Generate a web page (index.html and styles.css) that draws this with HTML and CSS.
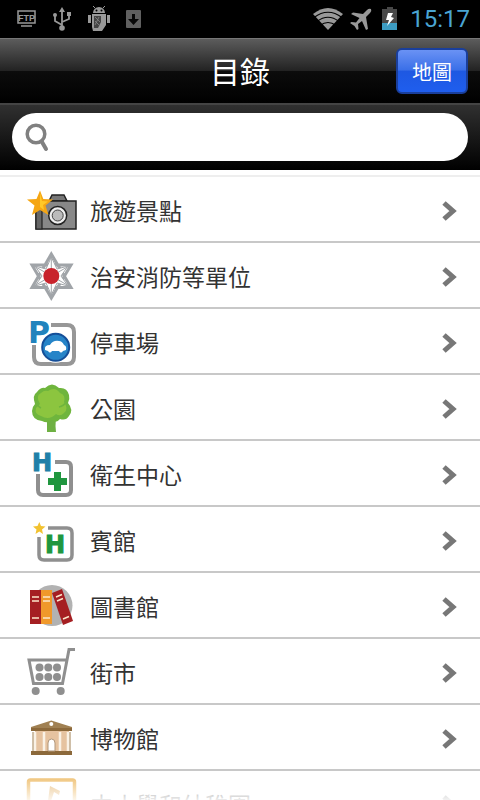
FILE: index.html
```html
<!DOCTYPE html>
<html lang="zh-Hant">
<head>
  <meta charset="UTF-8" />
  <meta name="viewport" content="width=device-width, initial-scale=1.0"/>
  <title>目錄</title>
  <link rel="stylesheet" href="styles.css">
</head>
<body>
  <div class="status-bar">
    <div class="status-left">
      <svg width="20" height="28" viewBox="0 0 20 28" aria-hidden="true">
        <rect x="1" y="6" width="17" height="12" fill="none" stroke="#999" stroke-width="1.5"/>
        <text x="9.5" y="15.500" class="ftp" text-anchor="middle">FTP</text>
        <path d="M4 21H15" stroke="#999" stroke-width="1.5"/>
      </svg>
      <svg width="20" height="28" viewBox="0 0 20 28" fill="none" stroke="#999" stroke-width="1.8" aria-hidden="true">
        <path d="M10 24V5M10 20L3 16V11M10 17L17 14V9"/>
        <path d="M10 2L13 7H7Z" fill="#999" stroke="none"/>
        <circle cx="10" cy="23" r="2.8" fill="#999" stroke="none"/>
        <circle cx="3" cy="10" r="2" fill="#999" stroke="none"/>
        <path d="M15 7H19V11H15Z" fill="#999" stroke="none"/>
      </svg>
      <svg width="24" height="28" viewBox="0 0 24 28" aria-hidden="true">
        <path d="M6 8A6 6 0 0 1 18 8ZM1 10H4V18H1ZM20 10H23V18H20ZM5 9H19V20L15 26H6L5 22Z" fill="#999"/>
        <path d="M8 3L6 1M16 3L18 1" stroke="#999"/>
        <path d="M4 8.5H20" stroke="#000"/>
        <path d="M7 11H14V17L11 23H7Z" fill="#444"/>
        <path d="M8 12L13 17M8 16L12 20M12 12L8 20" stroke="#888" stroke-width=".8"/>
        <circle cx="9.500" cy="5.500" r="1"/>
        <circle cx="14.500" cy="5.500" r="1"/>
      </svg>
      <svg width="16" height="28" viewBox="0 0 16 28" aria-hidden="true">
        <rect x="0" y="5" width="15" height="18" rx="1" fill="#606060"/>
        <path d="M6 9H9V14H13L7.500 20L2 14H6Z" fill="#080808"/>
      </svg>
    </div>
    <div class="status-right">
      <svg width="32" height="28" viewBox="0 0 32 28" aria-hidden="true">
        <path d="M1 9Q16 -3 31 9L16 25Z" fill="#999"/>
        <path d="M2 12.500Q16 2 30 12.500M5 16.500Q16 8 27 16.500M8 20.500Q16 14.500 24 20.500" fill="none" stroke="#000" stroke-width="1.200"/>
      </svg>
      <svg width="22" height="28" viewBox="0 0 22 28" aria-hidden="true">
        <path d="M21 4Q22 6 20 8L16 12L18 24L16 25L12 16L8 19L8.500 24L7 25L4.500 21L0 18L1.500 17L6 17.500L9.500 13L1 9L3 7.500L13 9L17 5Q19 3 21 4Z" fill="#999"/>
      </svg>
      <svg width="16" height="28" viewBox="0 0 16 28" aria-hidden="true">
        <path d="M5 2H11V4H15V25H0V4H5Z" fill="#484848"/>
        <path d="M0 18H15V25H0Z" fill="#3d9cc2"/>
        <path d="M6 8H11L9 12L12 13L5 21L7 15H4Z" fill="#fff"/>
      </svg>
      <span class="clock">15:17</span>
    </div>
  </div>

  <header class="title-bar">
    <h1>目錄</h1>
    <button type="button" class="map-button">地圖</button>
  </header>

  <form class="search-bar">
    <label class="search-box">
      <svg width="24" height="30" viewBox="0 0 24 30" fill="none" stroke="#808080" aria-hidden="true">
        <circle cx="11" cy="12" r="8.800" stroke-width="3.500"/>
        <path d="M17 20L21 27" stroke-width="4" stroke-linecap="round"/>
      </svg>
      <input type="search" aria-label="搜尋">
    </label>
  </form>

  <nav class="menu">
    <ul>
      <li><a href="#attractions">
        <svg class="icon" viewBox="0 0 56 64" aria-hidden="true">
          <path d="M25 24L28 18H40L43 24Z" fill="#777" stroke="#222" stroke-width="1.500"/>
          <rect x="12" y="24" width="40" height="28" fill="#888" stroke="#222" stroke-width="1.500"/>
          <path d="M12 24H18V52H12Z" fill="#666" stroke="#222" stroke-width="1.200"/>
          <circle cx="33.700" cy="38.500" r="9" fill="#eee" stroke="#222" stroke-width="1.500"/>
          <circle cx="33.700" cy="38.500" r="5.500" fill="#bbb" stroke="#444"/>
          <path d="M16 13.500L19.300 22L29 22.500L21.500 28.500L24.500 38L16 33L8 38L10.500 28.500L3 22.500L12.500 22Z" fill="#f5a614"/>
          <path d="M16 16L18 24L24 24.500L19 28L20 33L16 30Z" fill="#ffc928"/>
        </svg>
        <span>旅遊景點</span>
        <svg class="arrow" viewBox="0 0 16 22" aria-hidden="true"><path d="M3 3L12 11L3 19"/></svg>
      </a></li>
      <li><a href="#security">
        <svg class="icon" viewBox="0 0 56 64" fill="none" stroke="#a0a4a8" aria-hidden="true">
          <path d="M27.300 11L47 44.500H8ZM27.300 55L8 22H47Z" stroke-width="3"/>
          <path d="M27.300 14L33 26L44 23L37 33L44 43L33 40L27.300 52L22 40L11 43L18 33L11 23L22 26Z" fill="#fff" stroke-width="1"/>
          <path d="M27.300 13V53M10 23L45 43M45 23L10 43" stroke-width="1"/>
          <circle cx="27.300" cy="33" r="8" fill="#c8232c" stroke="none"/>
        </svg>
        <span>治安消防等單位</span>
        <svg class="arrow" viewBox="0 0 16 22" aria-hidden="true"><path d="M3 3L12 11L3 19"/></svg>
      </a></li>
      <li><a href="#parking">
        <svg class="icon" viewBox="0 0 56 64" aria-hidden="true">
          <path d="M27 16H43Q50 16 50 23V48Q50 55 43 55H17Q10 55 10 48V36" fill="none" stroke="#979797" stroke-width="4"/>
          <text x="4" y="34" class="letter letter-p">P</text>
          <circle cx="31.700" cy="38.300" r="15.500" fill="#fff"/>
          <circle cx="31.700" cy="38.300" r="13.500" fill="#2684c8" stroke="#154f99" stroke-width="2"/>
          <path d="M21 41Q20 36 26 36Q29 31 35 32Q38 32 40 36Q43 37 42 41L39 42Q37 45 35 42H28Q26 45 24 42Z" fill="#fff"/>
        </svg>
        <span>停車場</span>
        <svg class="arrow" viewBox="0 0 16 22" aria-hidden="true"><path d="M3 3L12 11L3 19"/></svg>
      </a></li>
      <li><a href="#parks">
        <svg class="icon" viewBox="0 0 56 64" aria-hidden="true">
          <path d="M23 42H32L31.500 51L32 57H23Z" fill="#6eb043"/>
          <path d="M18 46Q8 45 8 36Q8 32 11 29Q8 20 13 17Q17 12 21 13Q28 6 35 13Q43 12 45 20Q46 24 44 28Q50 35 45 41Q42 46 36 44Q32 49 28 45Q24 49 18 46Z" fill="#6fb53d"/>
          <path d="M17 41Q10 39 12 33L16 29Q11 21 17 18Q20 15 24 16Q31 11 36 18Q42 20 40 27Q45 34 40 38Q36 42 32 39Q25 46 17 41Z" fill="#8cc53f"/>
          <path d="M12 26Q13 31 17 33M43 26Q40 31 35 32" fill="none" stroke="#6fb53d" stroke-width="1.500"/>
        </svg>
        <span>公園</span>
        <svg class="arrow" viewBox="0 0 16 22" aria-hidden="true"><path d="M3 3L12 11L3 19"/></svg>
      </a></li>
      <li><a href="#health">
        <svg class="icon" viewBox="0 0 56 64" aria-hidden="true">
          <path d="M31 21H42Q47 21 47 26V49Q47 54 42 54H19Q14 54 14 49V33" fill="none" stroke="#8f8f8f" stroke-width="4"/>
          <text x="8" y="30" class="letter letter-h">H</text>
          <path d="M30 31H37V37H43V44H37V50H30V44H24V37H30Z" fill="#20963f"/>
        </svg>
        <span>衛生中心</span>
        <svg class="arrow" viewBox="0 0 16 22" aria-hidden="true"><path d="M3 3L12 11L3 19"/></svg>
      </a></li>
      <li><a href="#hotels">
        <svg class="icon" viewBox="0 0 56 64" aria-hidden="true">
          <path d="M24 21H43Q48 21 48 26V48Q48 53 43 53H20Q15 53 15 48V30" fill="none" stroke="#8f8f8f" stroke-width="3.500"/>
          <path d="M15.300 15L17 19L21.500 19.500L18 22.500L19 27L15.300 24.500L11.500 27L12.500 22.500L9 19.500L13.500 19Z" fill="#f2c230"/>
          <text x="21" y="46" class="letter letter-hotel">H</text>
        </svg>
        <span>賓館</span>
        <svg class="arrow" viewBox="0 0 16 22" aria-hidden="true"><path d="M3 3L12 11L3 19"/></svg>
      </a></li>
      <li><a href="#libraries">
        <svg class="icon" viewBox="0 0 56 64" aria-hidden="true">
          <circle cx="28" cy="32.500" r="20.500" fill="#b2b2b2"/>
          <path d="M6 17H17V51H6Z" fill="#a51f22"/>
          <path d="M17 17H28V51H17Z" fill="#f0992b"/>
          <path d="M28 20L38 16L49 48L39 52Z" fill="#a51f22"/>
          <path d="M8 24H15M8 28H15M8 45H15M19 24H26M19 28H26M19 45H26M32 24L38 21.500M33 28L39 25.500M39 46L45 43.500" stroke="#fbe7ca" stroke-width="1.500"/>
        </svg>
        <span>圖書館</span>
        <svg class="arrow" viewBox="0 0 16 22" aria-hidden="true"><path d="M3 3L12 11L3 19"/></svg>
      </a></li>
      <li><a href="#markets">
        <svg class="icon" viewBox="0 0 56 64" aria-hidden="true">
          <path d="M51 10.500H45L38.500 44.500H9.500L5 21H42" fill="none" stroke="#8f8f8f" stroke-width="3"/>
          <g fill="#8f8f8f">
            <circle cx="15.500" cy="28.500" r="4"/><circle cx="24.300" cy="28.500" r="4"/><circle cx="33" cy="28.500" r="4"/>
            <circle cx="15.500" cy="38" r="4"/><circle cx="24.300" cy="38" r="4"/><circle cx="33" cy="38" r="4"/>
            <circle cx="11.700" cy="52" r="4"/><circle cx="36.700" cy="52" r="4"/>
          </g>
        </svg>
        <span>街市</span>
        <svg class="arrow" viewBox="0 0 16 22" aria-hidden="true"><path d="M3 3L12 11L3 19"/></svg>
      </a></li>
      <li><a href="#museums">
        <svg class="icon" viewBox="0 0 56 64" aria-hidden="true">
          <path d="M11 26H45V46H11Z" fill="#e6c3a0"/>
          <path d="M7 22L27.300 15.500L48 22V23H7Z" fill="#a08052"/>
          <path d="M7 23H48V26H7ZM7 46H48V50H7Z" fill="#8c693b"/>
          <path d="M11 27V46M20 27V46M36 27V46M44 27V46" stroke="#faf2e6" stroke-width="2.500"/>
          <path d="M9 27V46M46 27V46" stroke="#a08052"/>
          <path d="M24 46V38Q24 34 27.500 34Q31 34 31 38V46Z" fill="#fff" stroke="#b1977b"/>
          <circle cx="27.300" cy="19" r="2" fill="#fff"/>
        </svg>
        <span>博物館</span>
        <svg class="arrow" viewBox="0 0 16 22" aria-hidden="true"><path d="M3 3L12 11L3 19"/></svg>
      </a></li>
      <li><a href="#schools">
        <svg class="icon" viewBox="0 0 56 64" aria-hidden="true">
          <rect x="4.500" y="9" width="46" height="44" rx="2" fill="none" stroke="#e59a1c" stroke-width="3.500"/>
          <path d="M26 15L36 20L35 24L30 21L27 30H24Z" fill="#dc9c3c"/>
        </svg>
        <span>中小學和幼稚園</span>
        <svg class="arrow" viewBox="0 0 16 22" aria-hidden="true"><path d="M3 3L12 11L3 19"/></svg>
      </a></li>
    </ul>
  </nav>
</body>
</html>
```
FILE: styles.css
```css
* {
  margin: 0;
  padding: 0;
  box-sizing: border-box;
}

body {
  display: flex;
  flex-direction: column;
  height: 100vh;
  overflow: hidden;
  background: #fff;
  color: #333;
  font-family: 'Noto Sans CJK TC', sans-serif;
}

svg {
  display: block;
  flex-shrink: 0;
}

.status-bar {
  display: flex;
  justify-content: space-between;
  flex-shrink: 0;
  height: 38px;
  padding: 5px 10px 5px 17px;
  background: #000;
}

.status-left,
.status-right {
  display: flex;
  align-items: center;
}

.status-left {
  gap: 15px;
}

.status-right {
  gap: 6px;
}

.status-right svg:nth-child(3) {
  margin-left: 4px;
}

.ftp {
  font: bold 9px 'Liberation Sans', sans-serif;
  fill: #999;
}

.clock {
  margin-left: 6px;
  font: 24px/28px Roboto, sans-serif;
  color: #4aa5d3;
}

.title-bar {
  display: grid;
  grid-template-columns: 1fr auto 1fr;
  align-items: center;
  flex-shrink: 0;
  height: 65px;
  padding: 0 12px;
  border-top: 1px solid #777;
  background: linear-gradient(#5c5c5c, #222 50%, #0c0c0c 50%, #000);
}

.title-bar h1 {
  grid-column: 2;
  padding-bottom: 2px;
  font-size: 30px;
  font-weight: 400;
  line-height: 40px;
  color: #fff;
}

.map-button {
  justify-self: end;
  width: 72px;
  height: 46px;
  border: 2px solid #1a3f9c;
  border-radius: 6px;
  background: linear-gradient(#6a92f4, #3a6fe8 48%, #1e58e2 50%, #1f5eee);
  font-family: inherit;
  font-size: 20px;
  color: #fff;
  cursor: pointer;
}

.search-bar {
  flex-shrink: 0;
  height: 67px;
  padding: 8px 12px;
  border-top: 2px solid #444;
  background: linear-gradient(#303030, #000);
}

.search-box {
  display: flex;
  align-items: center;
  gap: 8px;
  height: 48px;
  padding: 0 16px 0 13px;
  border-radius: 24px;
  background: #fff;
}

.search-box input {
  flex: 1;
  min-width: 0;
  border: none;
  outline: none;
  background: none;
  font-family: inherit;
  font-size: 20px;
}

.menu {
  position: relative;
  flex: 1;
  min-height: 0;
  padding-top: 5px;
  overflow: hidden;
}

/* list fades out at the bottom edge */
.menu::after {
  content: '';
  position: absolute;
  right: 0;
  bottom: 0;
  left: 0;
  height: 28px;
  background: linear-gradient(rgba(255, 255, 255, 0.3), rgba(255, 255, 255, 0.9));
}

.menu ul {
  list-style: none;
  border-top: 2px solid #eee;
}

.menu li {
  border-bottom: 2px solid #c8c8c8;
}

.menu a {
  display: flex;
  align-items: center;
  height: 64px;
  padding: 0 23px 0 24px;
  color: #333;
  text-decoration: none;
}

.menu span {
  flex: 1;
  padding: 1px 0 0 10px;
  font-size: 23px;
  line-height: 32px;
}

.icon {
  width: 56px;
  height: 64px;
}

.arrow {
  width: 16px;
  height: 24px;
  margin-top: 4px;
  fill: none;
  stroke: #777;
  stroke-width: 5;
}

.letter {
  font-family: 'DejaVu Sans', sans-serif;
  font-weight: bold;
}

.letter-p {
  font-size: 30px;
  fill: #2183bd;
}

.letter-h {
  font-size: 24px;
  fill: #217fa8;
  stroke: #217fa8;
}

.letter-hotel {
  font-size: 24px;
  fill: #20963f;
  stroke: #20963f;
}
```
